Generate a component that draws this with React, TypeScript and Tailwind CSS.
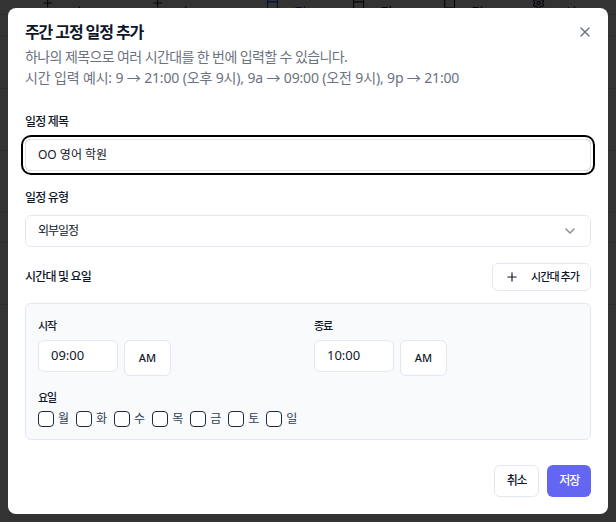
import {ChevronDown, Plus, X, Calendar, Square, Settings} from "lucide-react";

const DAYS = ["월", "화", "수", "목", "금", "토", "일"];

function BackgroundPage() {
  return (
    <div className="flex h-full flex-col bg-white">
      <header className="-mt-[9px] flex h-[24px] shrink-0 items-center border-b border-gray-200 text-sm text-gray-900">
        <div className="ml-[41px] flex items-center gap-[15px]">
          <Plus size={14} />
          <span>일정 추가</span>
        </div>
        <div className="ml-[30px] flex items-center gap-[11px]">
          <Plus size={14} />
          <span>일괄 추가</span>
        </div>
        <div className="ml-[38px] flex items-center gap-[15px] text-blue-700">
          <Calendar size={14} />
          <span>주간</span>
        </div>
        <div className="ml-[34px] flex items-center gap-[15px]">
          <Calendar size={14} />
          <span>3주간</span>
        </div>
        <div className="ml-[31px] flex items-center gap-[15px]">
          <Square size={14} />
          <span>월간</span>
        </div>
        <div className="ml-[36px] flex items-center gap-[19px]">
          <Settings size={14} />
          <span>보기 옵션</span>
        </div>
      </header>
      <div className="flex flex-1 flex-col">
        <div className="h-[22px] border-b border-gray-200" />
        <div className="h-[52px] border-b border-gray-200" />
        <div className="h-[62px] border-b border-gray-200" />
        <div className="h-[62px] border-b border-gray-200" />
        <div className="h-[30px] border-b border-gray-200" />
        <div className="h-[62px] border-b border-gray-200" />
      </div>
    </div>
  );
}

function TimeField({label, value}: {label: string; value: string}) {
  return (
    <div>
      <div className="text-[11px] font-medium leading-5 tracking-[-1px] text-[#0f172a]">
        {label}
      </div>
      <div className="mt-1 flex items-start gap-[6px]">
        <div className="flex h-8 w-20 items-center rounded-md border border-[#e2e8f0] bg-white px-3 text-[13px] text-[#0f172a]">
          {value}
        </div>
        <button
          type="button"
          className="h-9 w-[47px] rounded-md border border-[#e2e8f0] bg-white text-[11px] font-medium text-[#0f172a]"
        >
          AM
        </button>
      </div>
    </div>
  );
}

export default function App() {
  return (
    <div className="relative h-[522px] w-[616px] overflow-hidden font-['Noto_Sans','Noto_Sans_CJK_KR',sans-serif]">
      <BackgroundPage />
      <div className="absolute inset-0 bg-black/80" />

      {/* DIALOG */}
      <div className="absolute left-2 top-2 flex w-[600px] flex-col rounded-lg bg-white px-[17px] pb-[17px] pt-3">
        <div className="flex items-center justify-between">
          <h2 className="text-base font-bold leading-6 tracking-[-1.1px] text-[#0f172a]">
            주간 고정 일정 추가
          </h2>
          <button type="button" className="-mr-0.5 text-[#6b7280]" aria-label="닫기">
            <X size={16} />
          </button>
        </div>
        <div className="mt-[2px] text-sm leading-[21px] text-[#6b7280]">
          <p className="tracking-[-0.6px]">
            하나의 제목으로 여러 시간대를 한 번에 입력할 수 있습니다.
          </p>
          <p className="tracking-[-0.15px]">
            시간 입력 예시: 9 → 21:00 (오후 9시), 9a → 09:00 (오전 9시), 9p →
            21:00
          </p>
        </div>

        <label className="mt-6 text-xs font-medium leading-5 tracking-[-0.8px] text-[#0f172a]">
          일정 제목
        </label>
        <div className="mt-[7px] flex h-8 items-center rounded-md border border-[#e2e8f0] px-3 text-xs text-[#0f172a] ring-2 ring-black ring-offset-2">
          OO 영어 학원
        </div>

        <label className="mt-[17px] text-xs font-medium leading-5 tracking-[-0.8px] text-[#0f172a]">
          일정 유형
        </label>
        <div className="mt-[7px] flex h-8 items-center justify-between rounded-md border border-[#e2e8f0] px-3 text-xs text-[#0f172a]">
          <span className="tracking-[-1px]">외부일정</span>
          <ChevronDown size={16} className="opacity-50" />
        </div>

        <div className="mt-4 flex h-7 items-center justify-between">
          <span className="text-xs font-medium tracking-[-0.8px] text-[#0f172a]">
            시간대 및 요일
          </span>
          <button
            type="button"
            className="flex h-7 items-center gap-3 rounded-md border border-[#e2e8f0] pl-3 pr-[11px] text-[11px] font-medium tracking-[-0.9px] text-[#0f172a]"
          >
            <Plus size={14} />
            시간대 추가
          </button>
        </div>

        <div className="mt-3 rounded-md border border-[#e2e8f0] bg-[#f8fafc] p-3">
          <div className="grid grid-cols-2 gap-3">
            <TimeField label="시작" value="09:00" />
            <TimeField label="종료" value="10:00" />
          </div>

          <div className="mt-3 text-[11px] font-medium leading-5 tracking-[-1px] text-[#0f172a]">
            요일
          </div>
          <div className="mt-[3px] flex h-4 items-center gap-2">
            {DAYS.map((d) => (
              <label
                key={d}
                className="flex items-center gap-1 text-xs tracking-[-1px] text-[#334155]"
              >
                <span className="h-4 w-4 rounded-[4px] border border-[#1e293b] bg-white" />
                {d}
              </label>
            ))}
          </div>
        </div>

        <div className="mt-[25px] flex justify-end gap-2">
          <button
            type="button"
            className="h-8 rounded-md border border-[#e2e8f0] bg-white px-3 text-xs font-medium tracking-[-1.2px] text-[#0f172a]"
          >
            취소
          </button>
          <button
            type="button"
            className="h-8 rounded-md bg-[#6366f1] px-3 text-xs font-medium tracking-[-1.2px] text-white"
          >
            저장
          </button>
        </div>
      </div>
    </div>
  );
}
